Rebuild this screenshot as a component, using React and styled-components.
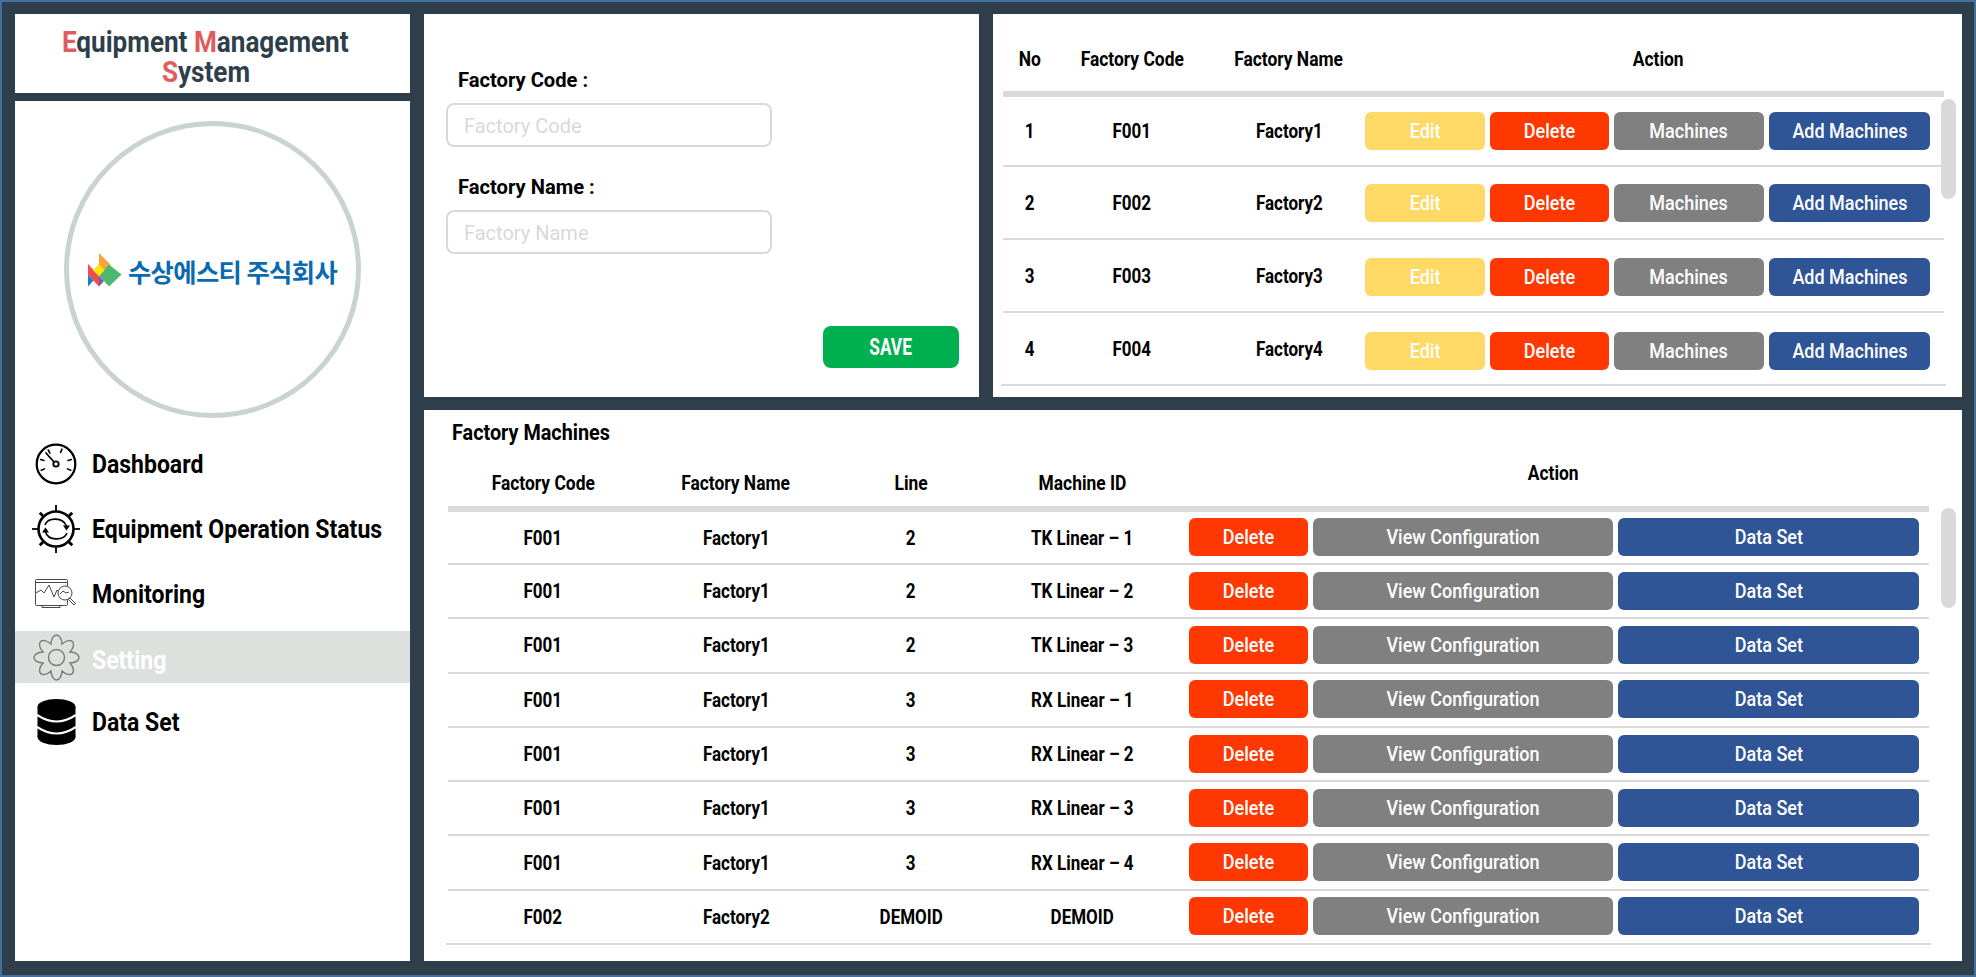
import React from "react";
import styled, { createGlobalStyle } from "styled-components";

const FONT = `"Roboto", "Liberation Sans", sans-serif`;

const Global = createGlobalStyle`
  html, body { margin: 0; padding: 0; background: #2e3e4a; }
  * { box-sizing: border-box; }
`;

const Page = styled.div`
  width: 1976px;
  height: 977px;
  overflow: hidden;
  border: 2px solid #41719c;
  background: #2e3e4a;
  padding: 12px 12px 14px 13px;
  display: grid;
  grid-template-columns: 395px 1538px;
  column-gap: 14px;
  font-family: ${FONT};
  color: #000;
`;

/* The reference's typeface is a condensed gothic; no condensed family is installed. */
const Narrow = styled.span`
  display: inline-block;
  white-space: nowrap;
  transform: scaleX(${(p) => p.$x});
  transform-origin: ${(p) => p.$origin || "center"};
`;

const Sidebar = styled.aside`
  display: flex;
  flex-direction: column;
  gap: 8px;
  min-height: 0;
`;

const Brand = styled.h1`
  margin: 0;
  height: 79px;
  flex: none;
  background: #fff;
  display: flex;
  flex-direction: column;
  align-items: center;
  justify-content: center;
  padding: 6px 14px 0 0;
  font-size: 29px;
  line-height: 30px;
  font-weight: 700;
  color: #2e3e4a;
`;

const Initial = styled.span`
  color: #e05d5d;
`;

const NavPanel = styled.nav`
  flex: 1;
  background: #fff;
  display: flex;
  flex-direction: column;
  align-items: stretch;
  padding-top: 20px;
`;

const LogoCircle = styled.div`
  width: 297px;
  height: 297px;
  flex: none;
  align-self: center;
  border: 5px solid #c9d3cf;
  border-radius: 50%;
  display: flex;
  align-items: center;
  justify-content: center;
  gap: 6px;
`;

const LogoText = styled.span`
  font-family: "Noto Sans CJK KR", sans-serif;
  font-size: 25.3px;
  font-weight: 700;
  letter-spacing: -0.6px;
  color: #0a6ab0;
  white-space: nowrap;
  margin-top: 2px;
`;

const NavList = styled.div`
  margin-top: 20px;
  display: flex;
  flex-direction: column;
  gap: 13px;
`;

const NavItem = styled.div`
  height: 52px;
  flex: none;
  display: flex;
  align-items: center;
  gap: 12px;
  padding-left: 17px;
  margin-top: ${(p) => (p.$active ? "-2px" : "0")};
  font-size: 25px;
  font-weight: 700;
  background: ${(p) => (p.$active ? "#dde1de" : "transparent")};
  color: ${(p) => (p.$active ? "#fff" : "#000")};
`;

const NavIcon = styled.span`
  width: 48px;
  flex: none;
  display: flex;
  justify-content: center;
`;

const NavLabel = styled.span`
  margin-top: ${(p) => (p.$active ? "6px" : "1px")};
`;

const Main = styled.main`
  display: grid;
  grid-template-rows: 383px 551px;
  row-gap: 13px;
  min-height: 0;
`;

const TopRow = styled.div`
  display: grid;
  grid-template-columns: 555px 969px;
  column-gap: 14px;
  min-height: 0;
`;

const Panel = styled.section`
  position: relative;
  background: #fff;
  overflow: hidden;
`;

const FormPanel = styled.form`
  background: #fff;
  display: flex;
  flex-direction: column;
  padding: 50px 20px 29px 22px;
`;

const Field = styled.div`
  display: flex;
  flex-direction: column;
  align-items: flex-start;
  margin-bottom: 24px;
`;

const Label = styled.label`
  height: 30px;
  display: flex;
  align-items: center;
  margin: 1px 0 8px 12px;
  font-size: 21px;
  font-weight: 700;
`;

const Input = styled.input`
  width: 326px;
  height: 44px;
  border: 2px solid #d9d9d9;
  border-radius: 8px;
  padding: 2px 16px 0;
  font-family: ${FONT};
  font-size: 20px;
  background: #fff;
  outline: none;
  &::placeholder {
    color: #d9d9d9;
    opacity: 1;
  }
`;

const SaveButton = styled.button`
  margin-top: auto;
  align-self: flex-end;
  width: 136px;
  height: 42px;
  border: none;
  border-radius: 8px;
  background: #00b050;
  color: #fff;
  font-family: ${FONT};
  font-size: 24px;
  font-weight: 700;
`;

const TableWrap = styled.div`
  padding: ${(p) => p.$pad};
`;

const PanelTitle = styled.h2`
  margin: 0;
  height: 30px;
  display: flex;
  align-items: center;
  padding-left: 4px;
  font-size: 22px;
  font-weight: 700;
`;

const HeadRow = styled.div`
  display: grid;
  grid-template-columns: ${(p) => p.$cols};
  height: ${(p) => p.$h}px;
  padding-top: 12px;
  border-bottom: 6px solid #d9d9d9;
`;

const HeadCell = styled.div`
  display: flex;
  align-items: center;
  justify-content: center;
  font-size: 20px;
  font-weight: 700;
  padding-bottom: ${(p) => p.$lift || 0}px;
  padding-left: ${(p) => (p.$lift === undefined ? 0 : 2)}px;
`;

const Row = styled.div`
  display: grid;
  grid-template-columns: ${(p) => p.$cols};
  height: ${(p) => p.$h}px;
  border-bottom: 2px solid #d9d9d9;
  &:last-child {
    margin: 0 -2px;
    padding: 0 2px;
  }
`;

const Cell = styled.div`
  display: flex;
  align-items: center;
  justify-content: center;
  font-size: 20px;
  font-weight: 700;
`;

const Actions = styled.div`
  display: grid;
  grid-template-columns: ${(p) => p.$cols};
  column-gap: 5px;
  align-items: center;
  margin-left: ${(p) => p.$shift}px;
  padding: ${(p) => p.$pad};
`;

const ActionButton = styled.button`
  height: 38px;
  border: none;
  border-radius: 6px;
  padding: 0;
  background: ${(p) => p.$bg};
  color: #fff;
  font-family: ${FONT};
  font-size: 20px;
  font-weight: 500;
`;

const ScrollThumb = styled.div`
  position: absolute;
  right: 6px;
  top: ${(p) => p.$top}px;
  width: 15px;
  height: 100px;
  border-radius: 8px;
  background: #d9d9d9;
`;

const COLORS = { edit: "#ffd966", del: "#ff3700", gray: "#808080", blue: "#2f5597" };

const factories = [
  ["1", "F001", "Factory1"],
  ["2", "F002", "Factory2"],
  ["3", "F003", "Factory3"],
  ["4", "F004", "Factory4"],
];

const machines = [
  ["F001", "Factory1", "2", "TK Linear – 1"],
  ["F001", "Factory1", "2", "TK Linear – 2"],
  ["F001", "Factory1", "2", "TK Linear – 3"],
  ["F001", "Factory1", "3", "RX Linear – 1"],
  ["F001", "Factory1", "3", "RX Linear – 2"],
  ["F001", "Factory1", "3", "RX Linear – 3"],
  ["F001", "Factory1", "3", "RX Linear – 4"],
  ["F002", "Factory2", "DEMOID", "DEMOID"],
];

const LogoMark = () => (
  <svg width="34" height="34" viewBox="0 0 34 34">
    <polygon points="11,0 22.5,11.5 15,18 11,12" fill="#f7a541" />
    <polygon points="21,11.5 33.5,21.5 21,33.5 11,22.5" fill="#4cb86f" />
    <polygon points="0,11 11,23 11,33.5 0,22" fill="#ef4b55" />
    <polygon points="0,22 5.5,27.5 0,33.5" fill="#1281c9" />
    <polygon points="11,23 16,28 11,33.5" fill="#7a5aa6" />
    <polygon points="11,11 16.5,17.5 11,23 5,17.5" fill="#ffe600" />
  </svg>
);

const polar = (cx, cy, r, deg) => {
  const a = ((deg - 90) * Math.PI) / 180;
  return [(cx + r * Math.cos(a)).toFixed(2), (cy + r * Math.sin(a)).toFixed(2)];
};

const DashboardIcon = () => (
  <svg width="42" height="42" viewBox="0 0 42 42" fill="none" stroke="#000" strokeLinecap="round">
    <circle cx="21" cy="21" r="19.3" strokeWidth="2.2" />
    {[-113, -74, -29, 22, 74, 113].map((d) => {
      const [x1, y1] = polar(21, 21, 12.5, d);
      const [x2, y2] = polar(21, 21, 16, d);
      return <line key={d} x1={x1} y1={y1} x2={x2} y2={y2} strokeWidth="1.6" />;
    })}
    <line x1="19" y1="19" x2="11" y2="10" strokeWidth="1.8" />
    <circle cx="21" cy="21" r="2.7" strokeWidth="1.8" fill="#fff" />
  </svg>
);

const OperationIcon = () => (
  <svg width="48" height="48" viewBox="0 0 48 48" fill="none" stroke="#000">
    <circle cx="24" cy="24" r="17.5" strokeWidth="2.6" />
    {[0, 45, 90, 135, 180, 225, 270, 315].map((d) => {
      const [x1, y1] = polar(24, 24, 17, d);
      const [x2, y2] = polar(24, 24, d % 90 === 0 ? 24 : 23, d);
      return <line key={d} x1={x1} y1={y1} x2={x2} y2={y2} strokeWidth={d % 90 === 0 ? 1.8 : 2.8} />;
    })}
    <path d="M13 20 C16 12 31 12 34.5 21" strokeWidth="1.6" />
    <path d="M35 28 C32 36 16 36 13.5 27" strokeWidth="1.6" />
    <polygon points="31,20.5 38,20.5 34.5,25.5" fill="#000" stroke="none" />
    <polygon points="10,27.5 17,27.5 13.5,22.5" fill="#000" stroke="none" />
  </svg>
);

const MonitoringIcon = () => (
  <svg width="42" height="30" viewBox="0 0 42 30" fill="none" stroke="#333" strokeWidth="0.9">
    <rect x="0.5" y="0.5" width="32" height="26" rx="1" />
    <line x1="0.5" y1="3.5" x2="32.5" y2="3.5" />
    <path d="M7 26.5 L7 28.5 L25 28.5 L25 26.5" />
    <polyline points="1,14 6,11 9,14 14,6 19,18 22,11 25,14" />
    <circle cx="30" cy="14" r="7" fill="#fff" />
    <polyline points="25,15 28,12 31,14 34,13" />
    <path d="M35 19 L40.5 24.5 L39 26 L33.5 20.5 Z" fill="#fff" />
  </svg>
);

const gearPath = (() => {
  const c = 23.5;
  let d = "";
  for (let i = 0; i < 8; i++) {
    const a = i * 45;
    const [vx, vy] = polar(c, c, 14.5, a - 22.5);
    const [c1x, c1y] = polar(c, c, 26, a - 11);
    const [c2x, c2y] = polar(c, c, 26, a + 11);
    const [ex, ey] = polar(c, c, 14.5, a + 22.5);
    d += (i === 0 ? `M${vx} ${vy} ` : "") + `C${c1x} ${c1y} ${c2x} ${c2y} ${ex} ${ey} `;
  }
  return d + "Z";
})();

const SettingIcon = () => (
  <svg width="47" height="47" viewBox="0 0 47 47" fill="none" stroke="#7b7b7b" strokeWidth="1.4">
    <path d={gearPath} />
    <circle cx="23.5" cy="23.5" r="8" />
  </svg>
);

const DataSetIcon = () => (
  <svg width="39" height="46" viewBox="0 0 39 46">
    <ellipse cx="19.5" cy="8" rx="19" ry="8" fill="#000" />
    <rect x="0.5" y="8" width="38" height="30" fill="#000" />
    <ellipse cx="19.5" cy="38" rx="19" ry="8" fill="#000" />
    <path d="M0 16 Q19.5 29 39 16 M0 28 Q19.5 41 39 28" fill="none" stroke="#fff" strokeWidth="2.2" />
  </svg>
);

const navItems = [
  { label: "Dashboard", icon: <DashboardIcon /> },
  { label: "Equipment Operation Status", icon: <OperationIcon /> },
  { label: "Monitoring", icon: <MonitoringIcon /> },
  { label: "Setting", icon: <SettingIcon />, active: true },
  { label: "Data Set", icon: <DataSetIcon /> },
];

const TOP_COLS = "54px 150px 164px 573px";
const BOTTOM_COLS = "190px 196px 154px 188px 753px";

const Btn = ({ bg, x = 0.9, children }) => (
  <ActionButton $bg={bg}>
    <Narrow $x={x}>{children}</Narrow>
  </ActionButton>
);

const Head = ({ lift, children }) => (
  <HeadCell $lift={lift}>
    <Narrow $x={0.87}>{children}</Narrow>
  </HeadCell>
);

const Body = ({ children }) => (
  <Cell>
    <Narrow $x={0.85}>{children}</Narrow>
  </Cell>
);

export default function App() {
  return (
    <>
      <Global />
      <Page>
        <Sidebar>
          <Brand>
            <Narrow $x={0.9}>
              <Initial>E</Initial>quipment <Initial>M</Initial>anagement
            </Narrow>
            <Narrow $x={0.9}>
              <Initial>S</Initial>ystem
            </Narrow>
          </Brand>
          <NavPanel>
            <LogoCircle>
              <LogoMark />
              <LogoText>수상에스티 주식회사</LogoText>
            </LogoCircle>
            <NavList>
              {navItems.map((item) => (
                <NavItem key={item.label} $active={item.active}>
                  <NavIcon>{item.icon}</NavIcon>
                  <NavLabel $active={item.active}>
                    <Narrow $x={0.92} $origin="left">{item.label}</Narrow>
                  </NavLabel>
                </NavItem>
              ))}
            </NavList>
          </NavPanel>
        </Sidebar>
        <Main>
          <TopRow>
            <FormPanel>
              <Field>
                <Label>
                  <Narrow $x={0.96} $origin="left">Factory Code :</Narrow>
                </Label>
                <Input placeholder="Factory Code" />
              </Field>
              <Field>
                <Label>
                  <Narrow $x={0.96} $origin="left">Factory Name :</Narrow>
                </Label>
                <Input placeholder="Factory Name" />
              </Field>
              <SaveButton type="button">
                <Narrow $x={0.72}>SAVE</Narrow>
              </SaveButton>
            </FormPanel>
            <Panel>
              <TableWrap $pad="0 18px 0 10px">
                <HeadRow $cols={TOP_COLS} $h={83}>
                  <Head>No</Head>
                  <Head>Factory Code</Head>
                  <Head>Factory Name</Head>
                  <Head lift={0}>Action</Head>
                </HeadRow>
                {factories.map(([no, code, name], i) => (
                  <Row key={no} $cols={TOP_COLS} $h={i === 0 ? 70 : 73}>
                    <Body>{no}</Body>
                    <Body>{code}</Body>
                    <Body>{name}</Body>
                    <Actions $cols="120px 119px 150px 161px" $shift={-6} $pad={`${i * 1.5}px 0 0`}>
                      <Btn bg={COLORS.edit}>Edit</Btn>
                      <Btn bg={COLORS.del}>Delete</Btn>
                      <Btn bg={COLORS.gray}>Machines</Btn>
                      <Btn bg={COLORS.blue}>Add Machines</Btn>
                    </Actions>
                  </Row>
                ))}
              </TableWrap>
              <ScrollThumb $top={85} />
            </Panel>
          </TopRow>
          <Panel>
            <TableWrap $pad="7px 33px 0 24px">
              <PanelTitle>
                <Narrow $x={0.9} $origin="left">Factory Machines</Narrow>
              </PanelTitle>
              <HeadRow $cols={BOTTOM_COLS} $h={65}>
                <Head>Factory Code</Head>
                <Head>Factory Name</Head>
                <Head>Line</Head>
                <Head>Machine ID</Head>
                <Head lift={20}>Action</Head>
              </HeadRow>
              {machines.map(([code, name, line, id], i) => (
                <Row key={id + code} $cols={BOTTOM_COLS} $h={i === 0 ? 53 : 54.3}>
                  <Body>{code}</Body>
                  <Body>{name}</Body>
                  <Body>{line}</Body>
                  <Body>{id}</Body>
                  <Actions $cols="119px 300px 301px" $shift={13} $pad="0 0 1px">
                    <Btn bg={COLORS.del}>Delete</Btn>
                    <Btn bg={COLORS.gray}>View Configuration</Btn>
                    <Btn bg={COLORS.blue}>Data Set</Btn>
                  </Actions>
                </Row>
              ))}
            </TableWrap>
            <ScrollThumb $top={98} />
          </Panel>
        </Main>
      </Page>
    </>
  );
}
